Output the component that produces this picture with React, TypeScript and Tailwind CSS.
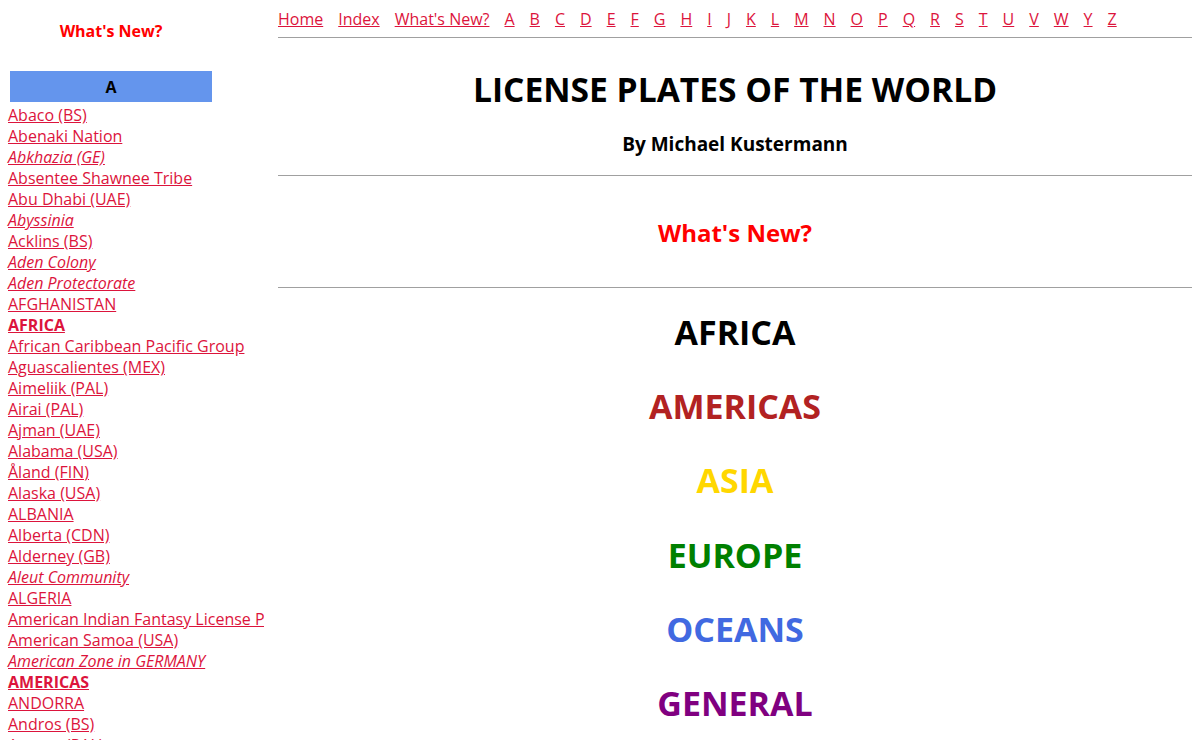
import React from 'react';

type Entry = { name: string; style?: 'italic' | 'bold' };

const entries: Entry[] = [
  { name: 'Abaco (BS)' },
  { name: 'Abenaki Nation' },
  { name: 'Abkhazia (GE)', style: 'italic' },
  { name: 'Absentee Shawnee Tribe' },
  { name: 'Abu Dhabi (UAE)' },
  { name: 'Abyssinia', style: 'italic' },
  { name: 'Acklins (BS)' },
  { name: 'Aden Colony', style: 'italic' },
  { name: 'Aden Protectorate', style: 'italic' },
  { name: 'AFGHANISTAN' },
  { name: 'AFRICA', style: 'bold' },
  { name: 'African Caribbean Pacific Group' },
  { name: 'Aguascalientes (MEX)' },
  { name: 'Aimeliik (PAL)' },
  { name: 'Airai (PAL)' },
  { name: 'Ajman (UAE)' },
  { name: 'Alabama (USA)' },
  { name: 'Åland (FIN)' },
  { name: 'Alaska (USA)' },
  { name: 'ALBANIA' },
  { name: 'Alberta (CDN)' },
  { name: 'Alderney (GB)' },
  { name: 'Aleut Community', style: 'italic' },
  { name: 'ALGERIA' },
  { name: 'American Indian Fantasy License Plates' },
  { name: 'American Samoa (USA)' },
  { name: 'American Zone in GERMANY', style: 'italic' },
  { name: 'AMERICAS', style: 'bold' },
  { name: 'ANDORRA' },
  { name: 'Andros (BS)' },
  { name: 'Angaur (PAL)' },
];

const navLinks = ['Home', 'Index', "What's New?", 'A', 'B', 'C', 'D', 'E', 'F', 'G', 'H', 'I', 'J', 'K', 'L', 'M', 'N', 'O', 'P', 'Q', 'R', 'S', 'T', 'U', 'V', 'W', 'Y', 'Z'];

const regions = [
  { name: 'AFRICA', color: 'text-black' },
  { name: 'AMERICAS', color: 'text-[#b22222]' },
  { name: 'ASIA', color: 'text-[#ffd700]' },
  { name: 'EUROPE', color: 'text-[#008000]' },
  { name: 'OCEANS', color: 'text-[#4169e1]' },
  { name: 'GENERAL', color: 'text-[#800080]' },
];

const Sidebar = () => (
  <div className="w-[264px] shrink-0 overflow-hidden pl-[8px] pt-[21px] whitespace-nowrap">
    <div className="w-[206px] text-center text-[16px] leading-[21px] font-bold text-[#ff0000]">What's New?</div>
    <div className="mt-[27px] w-[206px] p-[2px] pb-0">
      <div className="h-[31px] bg-[#6495ed] flex items-center justify-center text-[16px] font-bold text-black">A</div>
    </div>
    <ul className="mt-[3px]">
      {entries.map((e) => (
        <li key={e.name} className="text-[16px] leading-[21px]">
          <a
            href="#"
            className={
              'text-[#dc143c] underline ' +
              (e.style === 'italic' ? 'italic' : e.style === 'bold' ? 'font-bold' : '')
            }
          >
            {e.name}
          </a>
        </li>
      ))}
    </ul>
  </div>
);

export default function App() {
  return (
    <div className="h-[740px] overflow-hidden bg-white flex font-['Open_Sans',sans-serif] text-black">
      <Sidebar />
      <main className="flex-1 pl-[14px] pr-[8px]">
        <nav className="pt-[9px] flex gap-[15px] text-[16px] leading-[21px] whitespace-nowrap">
          {navLinks.map((l) => (
            <a key={l} href="#" className="text-[#dc143c] underline">
              {l}
            </a>
          ))}
        </nav>
        <hr className="mt-[7px] border-0 border-t border-[#a0a0a0]" />
        <h1 className="mt-[31px] text-center text-[33.6px] leading-[40px] font-bold">LICENSE PLATES OF THE WORLD</h1>
        <h3 className="mt-[22px] text-center text-[19px] leading-[26px] font-bold">By Michael Kustermann</h3>
        <hr className="mt-[18px] border-0 border-t border-[#a0a0a0]" />
        <h2 className="mt-[41px] text-center text-[24px] leading-[32px] font-bold text-[#ff0000]">What's New?</h2>
        <hr className="mt-[38px] border-0 border-t border-[#a0a0a0]" />
        <div className="mt-[24px] flex flex-col gap-[34.2px]">
          {regions.map((r) => (
            <div key={r.name} className={'text-center text-[34px] leading-[40px] font-bold ' + r.color}>
              {r.name}
            </div>
          ))}
        </div>
      </main>
    </div>
  );
}
